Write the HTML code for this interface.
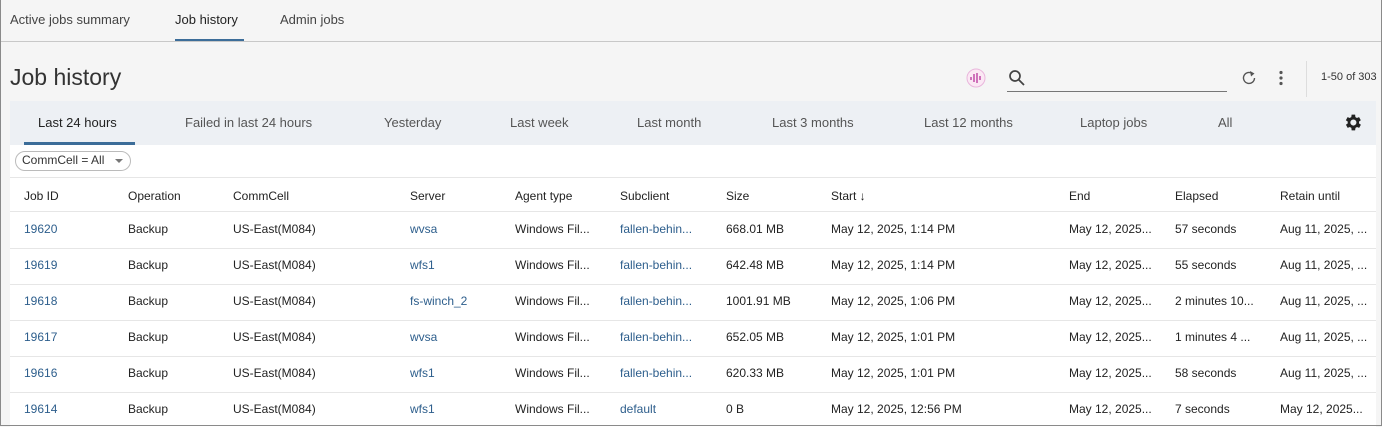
<!DOCTYPE html><html><head><style>
body{margin:0;width:1382px;height:427px;overflow:hidden;font-family:"Liberation Sans",sans-serif;background:#f5f5f5;color:#222;position:relative}
.frame{position:absolute;left:0;top:0;width:1380px;height:425px;border:1px solid #8a8a8a;border-top:none}
.t{position:absolute;white-space:nowrap}
.tabs{position:absolute;left:1px;top:0;width:1380px;height:41px;border-bottom:1px solid #c8c8c8}
.ft{position:absolute;left:10px;top:101px;width:1366px;height:44px;background:#edf0f4}
.white{position:absolute;left:10px;top:145px;width:1366px;height:282px;background:#fff}
.cell{position:absolute;font-size:12px;white-space:nowrap}
.link{color:#2d5e8c}
.hl{position:absolute;left:10px;width:1366px;height:1px;background:#e6e6e6}
</style></head><body>
<div class="tabs"></div>
<div class="t" style="left:10px;top:12px;font-size:13px;color:#444">Active jobs summary</div>
<div class="t" style="left:175px;top:12px;font-size:13px;color:#222">Job history</div>
<div style="position:absolute;left:175px;top:39px;width:69px;height:2px;background:#3c6d99"></div>
<div class="t" style="left:280px;top:12px;font-size:13px;color:#444">Admin jobs</div>
<div class="t" style="left:10px;top:64px;font-size:23px;color:#333">Job history</div>
<svg style="position:absolute;left:966px;top:68px" width="20" height="20"><circle cx="10" cy="10" r="9" fill="#fbe8f4" stroke="#e9b6dc"/><g stroke="#c04aa8" stroke-width="1.5"><line x1="5" y1="9" x2="5" y2="12"/><line x1="8" y1="6" x2="8" y2="14"/><line x1="11" y1="5" x2="11" y2="15"/><line x1="14" y1="8" x2="14" y2="12"/></g></svg>
<svg style="position:absolute;left:1008px;top:69px" width="18" height="18"><circle cx="7" cy="7" r="5" fill="none" stroke="#444" stroke-width="1.7"/><line x1="11" y1="11" x2="16" y2="16" stroke="#444" stroke-width="1.8"/></svg>
<div style="position:absolute;left:1007px;top:91px;width:220px;height:1px;background:#777"></div>
<svg style="position:absolute;left:1240px;top:69px" width="18" height="18"><path d="M14.5 9a5.5 5.5 0 1 1-2-4.3" fill="none" stroke="#555" stroke-width="1.4"/><path d="M10 2l4.5 2.5-3.5 3z" fill="#555"/></svg>
<svg style="position:absolute;left:1278px;top:70px" width="6" height="16"><circle cx="3" cy="2.5" r="1.6" fill="#555"/><circle cx="3" cy="8" r="1.6" fill="#555"/><circle cx="3" cy="13.5" r="1.6" fill="#555"/></svg>
<div style="position:absolute;left:1306px;top:61px;width:1px;height:36px;background:#ddd"></div>
<div class="t" style="left:1321px;top:71px;font-size:11px;color:#333">1-50 of 303</div>
<div class="ft"></div>
<div class="t" style="left:38px;top:115px;font-size:13px;color:#222">Last 24 hours</div>
<div style="position:absolute;left:24px;top:142px;width:111px;height:3px;background:#3c6d99"></div>
<div class="t" style="left:185px;top:115px;font-size:13px;color:#555">Failed in last 24 hours</div>
<div class="t" style="left:384px;top:115px;font-size:13px;color:#555">Yesterday</div>
<div class="t" style="left:510px;top:115px;font-size:13px;color:#555">Last week</div>
<div class="t" style="left:637px;top:115px;font-size:13px;color:#555">Last month</div>
<div class="t" style="left:772px;top:115px;font-size:13px;color:#555">Last 3 months</div>
<div class="t" style="left:924px;top:115px;font-size:13px;color:#555">Last 12 months</div>
<div class="t" style="left:1080px;top:115px;font-size:13px;color:#555">Laptop jobs</div>
<div class="t" style="left:1218px;top:115px;font-size:13px;color:#555">All</div>
<svg style="position:absolute;left:1342px;top:112px" width="21" height="21" viewBox="0 0 24 24"><path fill="#222" d="M19.4 13a7.5 7.5 0 0 0 0-2l2.1-1.6-2-3.5-2.5 1a7 7 0 0 0-1.7-1L15 3h-4l-.4 2.9a7 7 0 0 0-1.7 1l-2.5-1-2 3.5L6.6 11a7.5 7.5 0 0 0 0 2l-2.1 1.6 2 3.5 2.5-1a7 7 0 0 0 1.7 1L11 21h4l.4-2.9a7 7 0 0 0 1.7-1l2.5 1 2-3.5zM13 15.5a3.5 3.5 0 1 1 0-7 3.5 3.5 0 0 1 0 7z"/></svg>
<div class="white"></div>
<div style="position:absolute;left:15px;top:151px;width:114px;height:18px;border:1px solid #bbb;border-radius:10px;background:#fff"></div>
<div class="t" style="left:22px;top:153px;font-size:12px;color:#333">CommCell = All</div>
<div style="position:absolute;left:115px;top:159px;border:4px solid transparent;border-top:4px solid #777"></div>
<div class="hl" style="top:177px"></div>
<div class="hl" style="top:211px"></div>
<div class="cell" style="left:24px;top:189px">Job ID</div>
<div class="cell" style="left:128px;top:189px">Operation</div>
<div class="cell" style="left:233px;top:189px">CommCell</div>
<div class="cell" style="left:410px;top:189px">Server</div>
<div class="cell" style="left:515px;top:189px">Agent type</div>
<div class="cell" style="left:620px;top:189px">Subclient</div>
<div class="cell" style="left:726px;top:189px">Size</div>
<div class="cell" style="left:831px;top:189px">Start ↓</div>
<div class="cell" style="left:1069px;top:189px">End</div>
<div class="cell" style="left:1175px;top:189px">Elapsed</div>
<div class="cell" style="left:1280px;top:189px">Retain until</div>
<div id="rows"></div>
<script>
var d=[["19620","wvsa","fallen-behin...","668.01 MB","May 12, 2025, 1:14 PM","57 seconds","Aug 11, 2025, ..."],
["19619","wfs1","fallen-behin...","642.48 MB","May 12, 2025, 1:14 PM","55 seconds","Aug 11, 2025, ..."],
["19618","fs-winch_2","fallen-behin...","1001.91 MB","May 12, 2025, 1:06 PM","2 minutes 10...","Aug 11, 2025, ..."],
["19617","wvsa","fallen-behin...","652.05 MB","May 12, 2025, 1:01 PM","1 minutes 4 ...","Aug 11, 2025, ..."],
["19616","wfs1","fallen-behin...","620.33 MB","May 12, 2025, 1:01 PM","58 seconds","Aug 11, 2025, ..."],
["19614","wfs1","default","0 B","May 12, 2025, 12:56 PM","7 seconds","May 12, 2025..."]];
var h="";d.forEach(function(r,i){var y=212+i*36,ty=y+10;
h+='<div class="cell link" style="left:24px;top:'+ty+'px">'+r[0]+'</div><div class="cell" style="left:128px;top:'+ty+'px">Backup</div><div class="cell" style="left:233px;top:'+ty+'px">US-East(M084)</div><div class="cell link" style="left:410px;top:'+ty+'px">'+r[1]+'</div><div class="cell" style="left:515px;top:'+ty+'px">Windows Fil...</div><div class="cell link" style="left:620px;top:'+ty+'px">'+r[2]+'</div><div class="cell" style="left:726px;top:'+ty+'px">'+r[3]+'</div><div class="cell" style="left:831px;top:'+ty+'px">'+r[4]+'</div><div class="cell" style="left:1069px;top:'+ty+'px">May 12, 2025...</div><div class="cell" style="left:1175px;top:'+ty+'px">'+r[5]+'</div><div class="cell" style="left:1280px;top:'+ty+'px">'+r[6]+'</div>';
if(i<5)h+='<div class="hl" style="top:'+(y+36)+'px"></div>';});
document.getElementById("rows").innerHTML=h;
</script>
<div class="frame"></div>
</body></html>
